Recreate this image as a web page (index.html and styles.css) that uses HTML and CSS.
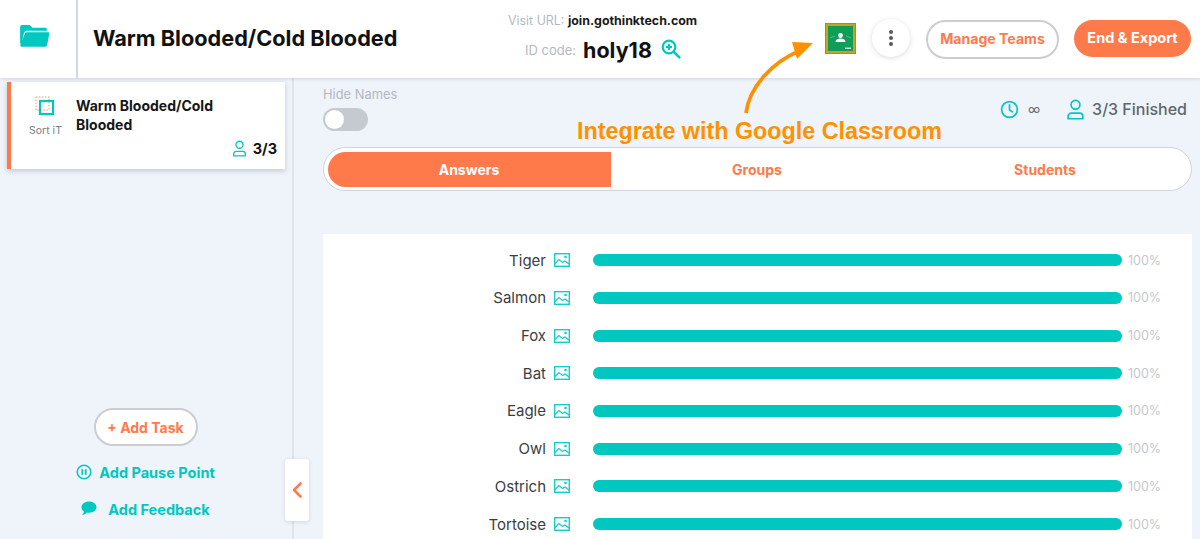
FILE: index.html
```html
<!DOCTYPE html>
<html lang="en">
<head>
<meta charset="utf-8">
<title>Warm Blooded/Cold Blooded</title>
<link rel="stylesheet" href="styles.css">
</head>
<body>
<header class="topbar">
  <div class="folder-cell">
    <svg class="folder" viewBox="0 0 32 24"><path d="M1 3a2 2 0 0 1 2-2h8l3 3h13a2 2 0 0 1 2 2v1H8a3 3 0 0 0-3 2.400L2.500 21 1 20z" fill="#00c7c0"/><path d="M8 8.500h22.500a1 1 0 0 1 1 1.200l-2.300 12.300a2 2 0 0 1-2 1.700H2.500a1.400 1.400 0 0 1-1.300-1.800L6 10a2 2 0 0 1 2-1.500z" fill="#00c7c0"/></svg>
  </div>
  <h1 class="title">Warm Blooded/Cold Blooded</h1>
  <div class="join">
    <div class="join-url"><span class="muted">Visit URL:</span> <b>join.gothinktech.com</b></div>
    <div class="join-code"><span class="muted">ID code:</span><b class="code">holy18</b>
      <svg class="zoom-ic" viewBox="0 0 20 20"><circle cx="8" cy="8" r="6.300" fill="none" stroke="#00c7c0" stroke-width="2.200"/><path d="M5 8h6M8 5v6" stroke="#00c7c0" stroke-width="2"/><path d="M12.800 12.800l5.500 5.500" stroke="#00c7c0" stroke-width="2.600" stroke-linecap="round"/></svg>
    </div>
  </div>
  <svg class="classroom" viewBox="0 0 31 31">
    <rect x="0" y="0" width="31" height="31" fill="#7d8f8a"/>
    <rect x="1" y="1" width="29" height="29" fill="#c7a51a"/>
    <rect x="3" y="3" width="25" height="25" fill="#0f9d58"/>
    <path d="M5 15l5-2M26 15l-5-2" stroke="#4fb987" stroke-width="1"/>
    <circle cx="15.500" cy="12.500" r="2.400" fill="#fff"/>
    <path d="M10.500 19c0-2.500 2.500-3.600 5-3.600s5 1.100 5 3.600z" fill="#fff"/>
    <rect x="20" y="24.500" width="6" height="1.500" fill="#cfe3d8"/>
  </svg>
  <button class="kebab" aria-label="More"><i></i><i></i><i></i></button>
  <button class="btn-outline">Manage Teams</button>
  <button class="btn-solid">End &amp; Export</button>
</header>

<div class="body">
  <aside class="sidebar">
    <div class="task-card">
      <div class="task-type">
        <svg class="sort-ic" viewBox="0 0 20 20"><rect x="1" y="1" width="13" height="13" fill="none" stroke="#ff7a4a" stroke-width=".8" stroke-dasharray="1.500 1.500"/><rect x="5" y="5" width="13" height="13" fill="none" stroke="#00c7c0" stroke-width="2.200"/></svg>
        <span>Sort iT</span>
      </div>
      <div class="task-main">
        <div class="task-name">Warm Blooded/Cold Blooded</div>
        <div class="task-count">
          <svg class="user-ic small" viewBox="0 0 18 20"><circle cx="9" cy="5.500" r="4.200" fill="none" stroke="#00c7c0" stroke-width="1.600"/><path d="M2 18.800v-2.300a3 3 0 0 1 3-3h8a3 3 0 0 1 3 3v2.300z" fill="none" stroke="#00c7c0" stroke-width="1.600" stroke-linejoin="round"/></svg>
          <b>3/3</b>
        </div>
      </div>
    </div>
    <div class="side-actions">
      <button class="btn-add">+ Add Task</button>
      <div class="side-link pause">
        <svg viewBox="0 0 16 16"><circle cx="8" cy="8" r="6.800" fill="none" stroke="#00c7c0" stroke-width="1.500"/><path d="M6.300 5.300v5.400M9.700 5.300v5.400" stroke="#00c7c0" stroke-width="1.800"/></svg>
        <span>Add Pause Point</span>
      </div>
      <div class="side-link feedback">
        <svg viewBox="0 0 16 15"><path d="M8 .5c4.300 0 7.500 2.500 7.500 5.600S12.300 11.700 8 11.700c-.8 0-1.500-.1-2.200-.2C4.600 13 2.800 14 1 14c1-.9 1.700-2 1.900-3.400C1.300 9.500.5 7.900.5 6.100.5 3 3.700.5 8 .5z" fill="#00c7c0"/></svg>
        <span>Add Feedback</span>
      </div>
    </div>
    <button class="collapse" aria-label="Collapse">
      <svg viewBox="0 0 12 18"><path d="M9.500 2.500L3 9l6.500 6.500" fill="none" stroke="#ff7a4a" stroke-width="2.600" stroke-linecap="round" stroke-linejoin="round"/></svg>
    </button>
  </aside>

  <main class="main">
    <div class="controls">
      <div class="hide-names">
        <span>Hide Names</span>
        <div class="toggle"><i></i></div>
      </div>
      <div class="stats">
        <svg class="clock" viewBox="0 0 20 20"><circle cx="10" cy="10" r="8.300" fill="none" stroke="#00c7c0" stroke-width="1.800"/><path d="M10 5v5.500l3 2" fill="none" stroke="#00c7c0" stroke-width="1.800" stroke-linecap="round" stroke-linejoin="round"/></svg>
        <span class="inf">∞</span>
        <svg class="user-ic" viewBox="0 0 18 20"><circle cx="9" cy="5.500" r="4.200" fill="none" stroke="#00c7c0" stroke-width="1.600"/><path d="M2 18.800v-2.300a3 3 0 0 1 3-3h8a3 3 0 0 1 3 3v2.300z" fill="none" stroke="#00c7c0" stroke-width="1.600" stroke-linejoin="round"/></svg>
        <span class="finished">3/3 Finished</span>
      </div>
    </div>
    <nav class="tabs">
      <div class="tab active">Answers</div>
      <div class="tab">Groups</div>
      <div class="tab">Students</div>
    </nav>
    <section class="panel">
      <div class="row"><span class="name">Tiger</span><svg class="img-ic" viewBox="0 0 16 14"><use href="#pic"/></svg><div class="bar"></div><span class="pct">100%</span></div>
      <div class="row"><span class="name">Salmon</span><svg class="img-ic" viewBox="0 0 16 14"><use href="#pic"/></svg><div class="bar"></div><span class="pct">100%</span></div>
      <div class="row"><span class="name">Fox</span><svg class="img-ic" viewBox="0 0 16 14"><use href="#pic"/></svg><div class="bar"></div><span class="pct">100%</span></div>
      <div class="row"><span class="name">Bat</span><svg class="img-ic" viewBox="0 0 16 14"><use href="#pic"/></svg><div class="bar"></div><span class="pct">100%</span></div>
      <div class="row"><span class="name">Eagle</span><svg class="img-ic" viewBox="0 0 16 14"><use href="#pic"/></svg><div class="bar"></div><span class="pct">100%</span></div>
      <div class="row"><span class="name">Owl</span><svg class="img-ic" viewBox="0 0 16 14"><use href="#pic"/></svg><div class="bar"></div><span class="pct">100%</span></div>
      <div class="row"><span class="name">Ostrich</span><svg class="img-ic" viewBox="0 0 16 14"><use href="#pic"/></svg><div class="bar"></div><span class="pct">100%</span></div>
      <div class="row"><span class="name">Tortoise</span><svg class="img-ic" viewBox="0 0 16 14"><use href="#pic"/></svg><div class="bar"></div><span class="pct">100%</span></div>
    </section>
  </main>
</div>

<div class="callout">
  <svg class="arrow" viewBox="0 0 78 78"><path d="M5 75C8 50 30 25 58 13" fill="none" stroke="#ff9100" stroke-width="3.800"/><path d="M72 5L51 4l5 17z" fill="#ff9100"/></svg>
  <span class="callout-text">Integrate with Google Classroom</span>
</div>

<svg class="defs" width="0" height="0"><defs><g id="pic"><rect x=".7" y=".7" width="14.600" height="12.600" fill="none" stroke="#14cfc8" stroke-width="1.400"/><path d="M1 10.500l4-4 3.500 3 2.500-1.500 4 3" fill="none" stroke="#14cfc8" stroke-width="1.200"/><circle cx="11.500" cy="4" r="1.300" fill="#14cfc8"/></g></defs></svg>
</body>
</html>
```

FILE: styles.css
```css
* { box-sizing: border-box; }
html, body { margin: 0; height: 539px; overflow: hidden; }
body { font-family: "Inter", "Liberation Sans", sans-serif; background: #eff3fa; color: #111; position: relative; }
button { font-family: inherit; cursor: pointer; }

.topbar { height: 78px; background: #fff; display: flex; align-items: center; box-shadow: 0 1px 3px rgba(60,70,90,.18); position: relative; z-index: 2; }
.folder-cell { width: 78px; height: 78px; border-right: 2px solid #d3d7de; display: flex; align-items: center; padding-left: 19px; flex: none; padding-bottom: 7px; }
.folder { width: 31px; height: 23px; }
.title { margin: 0 0 3px 15px; font-size: 21.700px; font-weight: 700; width: 415px; white-space: nowrap; flex: none; }
.join { width: 317px; flex: none; }
.join-url { font-size: 12.400px; line-height: 16px; margin-top: -3px; white-space: nowrap; }
.join-url b { font-size: 12.400px; color: #1a1a1a; font-weight: 700; margin-left: 0; }
.muted { color: #b5b9bf; font-weight: 400; }
.join-code { display: flex; align-items: center; padding-left: 17px; margin-top: 8px; height: 26px; font-size: 13px; }
.code { font-size: 21.500px; margin-left: 7px; font-weight: 700; }
.zoom-ic { width: 20px; height: 20px; margin: -1px 0 0 9px; }
.classroom { width: 31px; height: 31px; flex: none; margin: -1px 0 0 0; }
.kebab { width: 38px; height: 38px; border-radius: 50%; border: 0; background: #fff; box-shadow: 0 1px 5px rgba(60,70,90,.2); margin: -2px 0 0 16px; display: flex; flex-direction: column; align-items: center; justify-content: center; gap: 1.500px; padding: 0; flex: none; }
.kebab i { width: 4.500px; height: 4.500px; border-radius: 50%; background: #555a60; display: block; }
.btn-outline { width: 133px; height: 39px; border-radius: 20px; border: 2px solid #cbcdd0; background: #fff; color: #ff7a4a; font-size: 14.100px; font-weight: 700; margin: 0 0 0 16px; flex: none; padding: 0 0 2px; }
.btn-solid { width: 117px; height: 37px; border-radius: 19px; border: 0; background: #ff7a4a; color: #fff; font-size: 14.500px; font-weight: 700; margin: 0 0 1px 15px; flex: none; padding: 0 0 2px; }

.body { display: flex; height: 461px; }
.sidebar { width: 294px; border-right: 2px solid #dfe3ea; position: relative; flex: none; padding: 4px 0 0 7px; display: flex; flex-direction: column; }
.task-card { width: 278px; height: 87px; background: #fff; border-left: 4px solid #ff7a4a; box-shadow: 0 2px 5px rgba(60,70,90,.25); display: flex; padding: 14px 8px 0 0; flex: none; }
.task-type { width: 65px; display: flex; flex-direction: column; align-items: center; flex: none; }
.sort-ic { width: 20px; height: 20px; margin-left: 2px; }
.task-type span { font-size: 10.500px; color: #7b8087; margin: 8px 0 0 4px; }
.task-main { flex: 1; }
.task-name { font-size: 14px; font-weight: 700; line-height: 18.500px; width: 170px; margin-top: 1px; color: #161616; }
.task-count { display: flex; justify-content: flex-end; align-items: center; gap: 6px; margin-top: 6px; font-size: 14.500px; }
.user-ic.small { width: 15px; height: 17px; margin-left: 0; }
.side-actions { display: flex; flex-direction: column; align-items: center; margin-top: 239px; width: 277px; }
.btn-add { width: 104px; height: 38px; border-radius: 19px; border: 2px solid #cbcdd0; background: #fff; color: #ff7a4a; font-size: 14px; font-weight: 700; padding: 0; }
.side-link { display: flex; align-items: center; color: #00c7c0; font-size: 14.500px; font-weight: 700; white-space: nowrap; }
.side-link.pause { margin-top: 17px; gap: 7px; height: 18px; }
.side-link.feedback { margin-top: 19px; gap: 11px; height: 18px; }
.pause svg { width: 16px; height: 16px; }
.feedback svg { width: 16px; height: 15px; margin-bottom: 2px; }
.collapse { position: absolute; right: -17px; top: 381px; width: 24px; height: 62px; background: #fff; border: 0; border-radius: 3px; box-shadow: 0 1px 4px rgba(60,70,90,.15); padding: 0; display: flex; align-items: center; justify-content: center; z-index: 1; }
.collapse svg { width: 12px; height: 18px; }

.main { flex: 1; padding: 0 8px 0 29px; min-width: 0; }
.controls { height: 69px; display: flex; justify-content: space-between; }
.hide-names { padding-top: 8px; }
.hide-names span { display: block; font-size: 12.900px; color: #b5b9bf; line-height: 17px; }
.toggle { width: 45px; height: 23px; border-radius: 12px; background: #c5c9d0; margin-top: 5px; padding: 2px; }
.toggle i { display: block; width: 19px; height: 19px; border-radius: 50%; background: #fff; }
.stats { display: flex; align-items: center; height: 62px; padding-right: 5px; }
.clock { width: 19px; height: 19px; }
.inf { color: #6c7278; font-size: 13px; margin-left: 9px; }
.user-ic { width: 19px; height: 21px; margin-left: 26px; }
.finished { font-size: 16px; color: #5f666d; margin-left: 7px; font-weight: 500; }
.tabs { width: 869px; height: 44px; background: #fff; border: 1.500px solid #d2d4d8; border-radius: 22px; display: grid; grid-template-columns: 283px 293px 283px; padding: 3.500px; }
.tab { display: flex; align-items: center; justify-content: center; color: #ff7a4a; font-size: 14px; font-weight: 700; }
.tab.active { background: #ff7a4a; color: #fff; border-radius: 18px 0 0 18px; }
.panel { width: 869px; height: 305px; margin-top: 43px; background: #fff; padding-top: 7.400px; }
.row { height: 37.700px; display: flex; align-items: center; position: relative; }
.name { width: 223px; text-align: right; font-size: 15px; color: #3a3d42; flex: none; }
.img-ic { width: 16px; height: 14px; margin-left: 8px; flex: none; }
.bar { width: 529px; height: 12px; border-radius: 6px; background: #00c7c0; margin-left: 23px; flex: none; }
.pct { font-size: 12.500px; color: #c3c7cc; margin-left: 6px; }

.callout { position: absolute; left: 0; top: 0; pointer-events: none; z-index: 3; }
.arrow { position: absolute; left: 741px; top: 38px; width: 78px; height: 78px; }
.callout-text { position: absolute; left: 577px; top: 118px; font-family: "Liberation Sans", sans-serif; font-weight: 700; font-size: 23.300px; color: #ff9100; white-space: nowrap; }
.defs { position: absolute; }
```
